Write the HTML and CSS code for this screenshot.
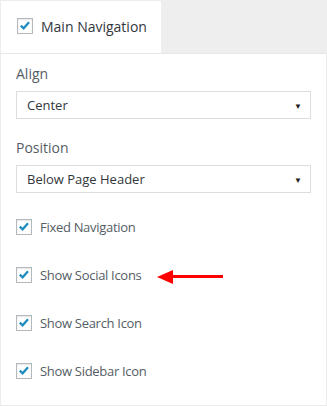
FILE: index.html
```html
<!DOCTYPE html>
<html lang="en">
<head>
    <meta charset="UTF-8">
    <meta name="viewport" content="width=device-width, initial-scale=1.0">
    <title>Main Navigation</title>
    <link rel="stylesheet" href="styles.css">
</head>
<body>
    <div class="settings">
        <div class="tabs">
            <label class="tab active">
                <span class="box"></span>
                Main Navigation
            </label>
        </div>

        <div class="panel">
            <div class="field">
                <div class="field-label">Align</div>
                <div class="select">
                    <span>Center</span>
                    <span class="caret">&#9660;</span>
                </div>
            </div>

            <div class="field">
                <div class="field-label">Position</div>
                <div class="select">
                    <span>Below Page Header</span>
                    <span class="caret">&#9660;</span>
                </div>
            </div>

            <label class="check">
                <span class="box"></span>
                Fixed Navigation
            </label>

            <label class="check">
                <span class="box"></span>
                Show Social Icons
                <span class="arrow"></span>
            </label>

            <label class="check">
                <span class="box"></span>
                Show Search Icon
            </label>

            <label class="check">
                <span class="box"></span>
                Show Sidebar Icon
            </label>
        </div>
    </div>
</body>
</html>
```

FILE: styles.css
```css
* {
    box-sizing: border-box;
}
body {
    margin: 0;
    font-family: "Open Sans", sans-serif;
    background: #fff;
}
.settings {
    width: 327px;
    height: 406px;
    display: flex;
    flex-direction: column;
}
.tabs {
    display: flex;
    height: 54px;
    background-color: #eeeeee;
    border-bottom: 1px solid #e8e8e8;
}
.tab {
    width: 161px;
    display: flex;
    align-items: center;
    gap: 8px;
    padding: 0 0 2px 16px;
    background: #fff;
    border-top: 1px solid #ececec;
    border-left: 1px solid #ececec;
    font-size: 14px;
    color: #32373c;
}
.panel {
    flex: 1;
    padding: 10px 15px 0 15px;
    border: 1px solid #ececec;
    border-top: none;
}
.field {
    margin-bottom: 19px;
}
.field:nth-child(2) {
    margin-bottom: 10px;
}
.field-label {
    font-size: 14px;
    color: #555d66;
    margin-bottom: 8px;
}
.select {
    height: 28px;
    display: flex;
    align-items: center;
    justify-content: space-between;
    padding: 0 8px 0 10px;
    border: 1px solid #dddddd;
    font-size: 13px;
    color: #32373c;
}
.caret {
    font-size: 8px;
    color: #222;
}
.check {
    position: relative;
    display: flex;
    align-items: center;
    gap: 8px;
    height: 48px;
    font-size: 13px;
    letter-spacing: -0.3px;
    color: #555d66;
}
.box {
    width: 16px;
    height: 16px;
    flex: none;
    border: 1px solid #b4b9be;
    box-shadow: inset 0 1px 2px rgba(0,0,0,0.1);
    background: #fff url("data:image/svg+xml,%3Csvg xmlns='http://www.w3.org/2000/svg' viewBox='0 0 16 16'%3E%3Cpath d='M3.2 7.6 L6.4 10.6 L12.6 3.6' fill='none' stroke='%231e8cbe' stroke-width='2.6'/%3E%3C/svg%3E") center / 14px 14px no-repeat;
}
.arrow {
    position: absolute;
    left: 141px;
    top: 19px;
    width: 67px;
    height: 14px;
}
.arrow::before {
    content: "";
    position: absolute;
    left: 0;
    top: 0;
    border-top: 7px solid transparent;
    border-bottom: 7px solid transparent;
    border-right: 16px solid #ff0000;
}
.arrow::after {
    content: "";
    position: absolute;
    left: 14px;
    top: 5px;
    width: 52px;
    height: 3px;
    background: #ff0000;
}
```
